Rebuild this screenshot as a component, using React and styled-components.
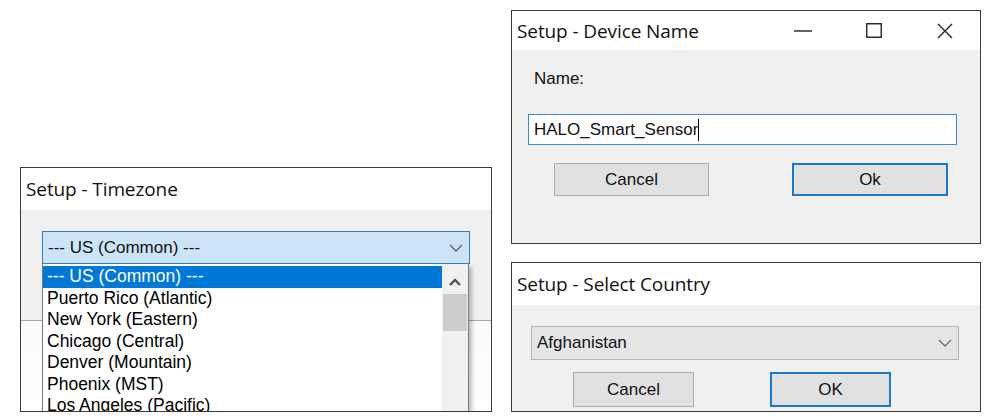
import React from "react";
import styled, { createGlobalStyle } from "styled-components";

const Global = createGlobalStyle`
  html, body { margin: 0; padding: 0; background: #ffffff; }
  body { width: 990px; height: 419px; overflow: hidden; }
`;

const Desktop = styled.div`
  position: relative;
  width: 990px;
  height: 419px;
  background: #ffffff;
  overflow: hidden;
`;

const Window = styled.div`
  position: absolute;
  left: ${(p) => p.$x}px;
  top: ${(p) => p.$y}px;
  width: ${(p) => p.$w}px;
  height: ${(p) => p.$h}px;
  box-sizing: border-box;
  border: 1px solid #3a3a3a;
  background: #f0f0f0;
  display: flex;
  flex-direction: column;
  overflow: hidden;
`;

const TitleBar = styled.div`
  height: ${(p) => p.$h}px;
  flex: none;
  background: #ffffff;
  display: flex;
  align-items: center;
  padding-left: 5px;
  font-family: "Open Sans", "Noto Sans", sans-serif;
  font-size: 19px;
  color: #111111;
  letter-spacing: -0.1px;
`;

const Title = styled.div`
  flex: 1;
  white-space: nowrap;
`;

const Controls = styled.div`
  display: flex;
  align-items: center;
  height: 100%;
`;

const CtrlButton = styled.div`
  width: 71px;
  height: 100%;
  display: flex;
  align-items: center;
  justify-content: center;
`;

const Body = styled.div`
  flex: 1;
  display: flex;
  flex-direction: column;
  padding: ${(p) => p.$pad};
  font-family: "Liberation Sans", Arial, sans-serif;
  font-size: 17px;
  color: #000000;
`;

const TzBody = styled.div`
  position: relative;
  height: 111px;
  flex: none;
  box-sizing: border-box;
  border-bottom: 1px solid #a8a8a8;
  padding: 21px 21px 0 21px;
  font-family: "Liberation Sans", Arial, sans-serif;
  font-size: 17px;
`;

const TzLower = styled.div`
  flex: 1;
  background: linear-gradient(#fbfbfb, #ffffff);
`;

const Combo = styled.div`
  height: ${(p) => p.$h}px;
  box-sizing: border-box;
  border: 1px solid ${(p) => (p.$hot ? "#2f7ec4" : "#b4b4b4")};
  background: ${(p) => (p.$hot ? "#cce4f7" : "#e5e5e5")};
  display: flex;
  align-items: center;
  justify-content: space-between;
  padding: 0 6px 0 5px;
  margin-right: ${(p) => p.$mr || 0}px;
  font-family: "Liberation Sans", Arial, sans-serif;
  font-size: 17px;
  color: #111;
`;

const DropList = styled.div`
  position: absolute;
  left: 21px;
  top: 54px;
  width: 427px;
  height: 160px;
  box-sizing: border-box;
  border: 1px solid #7a7a7a;
  border-top: none;
  background: #ffffff;
  display: flex;
  box-shadow: 3px 3px 4px rgba(0, 0, 0, 0.25);
  padding-top: 2px;
`;

const Items = styled.div`
  flex: 1;
  display: flex;
  flex-direction: column;
`;

const Item = styled.div`
  height: 21.5px;
  line-height: 21.5px;
  padding-left: 4px;
  white-space: nowrap;
  color: ${(p) => (p.$sel ? "#ffffff" : "#000000")};
  background: ${(p) => (p.$sel ? "#0078d7" : "transparent")};
  font-size: 17.5px;
`;

const ScrollBar = styled.div`
  width: 26px;
  flex: none;
  background: #f0f0f0;
  display: flex;
  flex-direction: column;
  align-items: center;
  margin-top: -2px;
`;

const ScrollArrow = styled.div`
  height: 30px;
  width: 100%;
  display: flex;
  align-items: center;
  justify-content: center;
  padding-top: 6px;
  box-sizing: border-box;
`;

const Thumb = styled.div`
  width: 24px;
  height: 37px;
  background: #cdcdcd;
`;

const Label = styled.div`
  line-height: 18px;
  color: #111;
  padding-left: 22px;
`;

const TextInput = styled.div`
  margin-top: ${(p) => p.$mt}px;
  margin-left: 16px;
  margin-right: 23px;
  height: 31px;
  box-sizing: border-box;
  border: 1px solid #3d8ad2;
  background: #ffffff;
  display: flex;
  align-items: center;
  padding-left: 5px;
  color: #111;
`;

const Caret = styled.span`
  display: inline-block;
  width: 1px;
  height: 22px;
  background: #000;
`;

const ButtonRow = styled.div`
  display: flex;
  margin-top: ${(p) => p.$mt}px;
  padding-left: ${(p) => p.$pl}px;
  gap: ${(p) => p.$gap}px;
`;

const Button = styled.div`
  width: ${(p) => p.$w}px;
  height: ${(p) => p.$h}px;
  box-sizing: border-box;
  border: ${(p) => (p.$default ? "2px solid #1a78cf" : "1px solid #adadad")};
  background: #e1e1e1;
  display: flex;
  align-items: center;
  justify-content: center;
  font-family: "Liberation Sans", Arial, sans-serif;
  font-size: 17px;
  color: #111;
`;

const Chevron = ({ color = "#606060" }) => (
  <svg width="14" height="8" viewBox="0 0 14 8">
    <path d="M1 1 L7 7 L13 1" fill="none" stroke={color} strokeWidth="1.4" />
  </svg>
);

const UpCaret = () => (
  <svg width="12" height="8" viewBox="0 0 12 8">
    <path d="M1 7 L6 2 L11 7" fill="none" stroke="#505050" strokeWidth="2.4" />
  </svg>
);

const zones = [
  "Puerto Rico (Atlantic)",
  "New York (Eastern)",
  "Chicago (Central)",
  "Denver (Mountain)",
  "Phoenix (MST)",
  "Los Angeles (Pacific)",
];

export default function App() {
  return (
    <>
      <Global />
      <Desktop>
        <Window $x={20} $y={167} $w={472} $h={245}>
          <TitleBar $h={42}>
            <Title>Setup - Timezone</Title>
          </TitleBar>
          <TzBody>
            <Combo $h={33} $hot>
              <span>--- US (Common) ---</span>
              <Chevron />
            </Combo>
            <DropList>
              <Items>
                <Item $sel>--- US (Common) ---</Item>
                {zones.map((z) => (
                  <Item key={z}>{z}</Item>
                ))}
              </Items>
              <ScrollBar>
                <ScrollArrow>
                  <UpCaret />
                </ScrollArrow>
                <Thumb />
              </ScrollBar>
            </DropList>
          </TzBody>
          <TzLower />
        </Window>

        <Window $x={511} $y={10} $w={470} $h={234}>
          <TitleBar $h={39}>
            <Title>Setup - Device Name</Title>
            <Controls>
              <CtrlButton>
                <svg width="18" height="4" viewBox="0 0 18 4">
                  <path d="M0 2 H18" stroke="#222" strokeWidth="1.4" />
                </svg>
              </CtrlButton>
              <CtrlButton>
                <svg width="16" height="15" viewBox="0 0 16 15">
                  <rect x="0.75" y="0.75" width="14.5" height="13.5" fill="none" stroke="#222" strokeWidth="1.4" />
                </svg>
              </CtrlButton>
              <CtrlButton>
                <svg width="16" height="16" viewBox="0 0 16 16">
                  <path d="M1 1 L15 15 M15 1 L1 15" stroke="#222" strokeWidth="1.4" />
                </svg>
              </CtrlButton>
            </Controls>
          </TitleBar>
          <Body $pad="20px 0 0 0">
            <Label>Name:</Label>
            <TextInput $mt={26}>
              HALO_Smart_Sensor
              <Caret />
            </TextInput>
            <ButtonRow $mt={18} $pl={42} $gap={83}>
              <Button $w={155} $h={33}>Cancel</Button>
              <Button $w={156} $h={33} $default>Ok</Button>
            </ButtonRow>
          </Body>
        </Window>

        <Window $x={511} $y={262} $w={470} $h={150}>
          <TitleBar $h={42}>
            <Title>Setup - Select Country</Title>
          </TitleBar>
          <Body $pad="21px 0 0 19px">
            <Combo $h={34} $mr={21}>
              <span>Afghanistan</span>
              <Chevron color="#6a6a6a" />
            </Combo>
            <ButtonRow $mt={12} $pl={42} $gap={76}>
              <Button $w={121} $h={35}>Cancel</Button>
              <Button $w={121} $h={35} $default>OK</Button>
            </ButtonRow>
          </Body>
        </Window>
      </Desktop>
    </>
  );
}
